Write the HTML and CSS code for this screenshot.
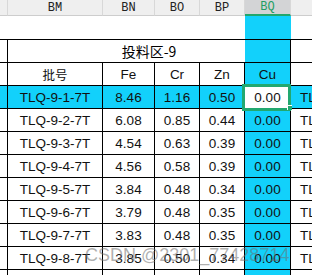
FILE: index.html
```html
<!DOCTYPE html>
<html lang="zh">
<head>
    <meta charset="UTF-8">
    <meta name="viewport" content="width=device-width, initial-scale=1.0">
    <title>投料区-9</title>
    <link rel="stylesheet" href="styles.css">
</head>
<body>
    <div class="sheet">
        <div class="row col-head">
            <div class="cell"></div>
            <div class="cell">BM</div>
            <div class="cell">BN</div>
            <div class="cell">BO</div>
            <div class="cell">BP</div>
            <div class="cell sel">BQ</div>
            <div class="cell"></div>
        </div>

        <div class="row blank">
            <div class="cell"></div>
            <div class="cell"></div>
            <div class="cell"></div>
            <div class="cell"></div>
            <div class="cell"></div>
            <div class="cell cu"></div>
            <div class="cell"></div>
        </div>

        <div class="row title">
            <div class="cell"></div>
            <div class="cell merged">投料区-9</div>
            <div class="cell"></div>
        </div>

        <div class="row data">
            <div class="cell"></div>
            <div class="cell cjk">批号</div>
            <div class="cell">Fe</div>
            <div class="cell">Cr</div>
            <div class="cell">Zn</div>
            <div class="cell cu">Cu</div>
            <div class="cell"></div>
        </div>

        <div class="row data hl">
            <div class="cell"></div>
            <div class="cell">TLQ-9-1-7T</div>
            <div class="cell">8.46</div>
            <div class="cell">1.16</div>
            <div class="cell">0.50</div>
            <div class="cell active">0.00</div>
            <div class="cell next">TLQ-9-1-7T</div>
        </div>
        <div class="row data">
            <div class="cell"></div>
            <div class="cell">TLQ-9-2-7T</div>
            <div class="cell">6.08</div>
            <div class="cell">0.85</div>
            <div class="cell">0.44</div>
            <div class="cell cu">0.00</div>
            <div class="cell next">TLQ-9-2-7T</div>
        </div>
        <div class="row data">
            <div class="cell"></div>
            <div class="cell">TLQ-9-3-7T</div>
            <div class="cell">4.54</div>
            <div class="cell">0.63</div>
            <div class="cell">0.39</div>
            <div class="cell cu">0.00</div>
            <div class="cell next">TLQ-9-3-7T</div>
        </div>
        <div class="row data">
            <div class="cell"></div>
            <div class="cell">TLQ-9-4-7T</div>
            <div class="cell">4.56</div>
            <div class="cell">0.58</div>
            <div class="cell">0.39</div>
            <div class="cell cu">0.00</div>
            <div class="cell next">TLQ-9-4-7T</div>
        </div>
        <div class="row data">
            <div class="cell"></div>
            <div class="cell">TLQ-9-5-7T</div>
            <div class="cell">3.84</div>
            <div class="cell">0.48</div>
            <div class="cell">0.34</div>
            <div class="cell cu">0.00</div>
            <div class="cell next">TLQ-9-5-7T</div>
        </div>
        <div class="row data">
            <div class="cell"></div>
            <div class="cell">TLQ-9-6-7T</div>
            <div class="cell">3.79</div>
            <div class="cell">0.48</div>
            <div class="cell">0.35</div>
            <div class="cell cu">0.00</div>
            <div class="cell next">TLQ-9-6-7T</div>
        </div>
        <div class="row data">
            <div class="cell"></div>
            <div class="cell">TLQ-9-7-7T</div>
            <div class="cell">3.83</div>
            <div class="cell">0.48</div>
            <div class="cell">0.35</div>
            <div class="cell cu">0.00</div>
            <div class="cell next">TLQ-9-7-7T</div>
        </div>
        <div class="row data">
            <div class="cell"></div>
            <div class="cell">TLQ-9-8-7T</div>
            <div class="cell">3.85</div>
            <div class="cell">0.50</div>
            <div class="cell">0.34</div>
            <div class="cell cu">0.00</div>
            <div class="cell next">TLQ-9-8-7T</div>
        </div>
        <div class="row data">
            <div class="cell"></div>
            <div class="cell"></div>
            <div class="cell"></div>
            <div class="cell"></div>
            <div class="cell"></div>
            <div class="cell cu"></div>
            <div class="cell"></div>
        </div>

        <div class="watermark">CSDN @2301_77428714</div>
    </div>
</body>
</html>
```

FILE: styles.css
```css
body {
    margin: 0;
    font-family: "Liberation Sans", Arial, sans-serif;
    background-color: #fff;
    overflow: hidden;
}
.sheet {
    position: relative;
    width: 312px;
    height: 275px;
    overflow: hidden;
}
.row {
    display: grid;
    grid-template-columns: 8px 95px 52px 45px 45px 46px 60px;
}
.cell {
    box-sizing: border-box;
    display: flex;
    align-items: center;
    justify-content: center;
    white-space: nowrap;
    overflow: hidden;
    font-size: 13.5px;
    color: #111;
}

/* column letters */
.col-head .cell {
    height: 16px;
    background-color: #efefef;
    border-right: 1px solid #d8d8d8;
    border-bottom: 1px solid #cdcdcd;
    font-family: "Liberation Mono", monospace;
    font-size: 12px;
    color: #222;
}
.col-head .cell.sel {
    background-color: #d3d4d6;
    color: #1f9e64;
    border-bottom: 2px solid #22a66c;
}

.blank .cell {
    height: 24px;
    border-bottom: 1px solid #000;
}
.blank .cell:first-child {
    border-bottom: 1px solid #000;
}

.title .cell {
    height: 23px;
    border-bottom: 1px solid #000;
}
.title .cell:first-child {
    border-right: 1px solid #000;
}
.title .merged {
    grid-column: span 5;
    border-right: 1px solid #000;
    background: linear-gradient(to right, #fff 237px, #12d1fb 237px);
    font-family: "Noto Sans CJK SC", sans-serif;
    font-size: 14px;
    color: #000;
}

.data .cell {
    height: 23px;
    border-right: 1px solid #000;
    border-bottom: 1px solid #000;
}
.data .cell.next {
    border-right: none;
    justify-content: flex-start;
    padding-left: 9px;
}
.cjk {
    font-family: "Noto Sans CJK SC", sans-serif;
    font-size: 12.5px !important;
}
.cu {
    background-color: #12d1fb;
}
.hl .cell {
    background-color: #12d1fb;
}
.hl .cell.active {
    position: relative;
    overflow: visible;
    background-color: #fff;
}
.hl .cell.active::before {
    content: "";
    position: absolute;
    left: -3px;
    top: -2px;
    width: 49px;
    height: 27px;
    box-sizing: border-box;
    border: 3px solid #22a870;
}
.hl .cell.active::after {
    content: "";
    position: absolute;
    right: -2px;
    bottom: -2px;
    width: 4px;
    height: 4px;
    background-color: #22a870;
    border-left: 1px solid #fff;
    border-top: 1px solid #fff;
}

.watermark {
    position: absolute;
    left: 85px;
    top: 245px;
    font-size: 18px;
    color: rgba(110, 110, 110, 0.55);
    white-space: nowrap;
}
```
